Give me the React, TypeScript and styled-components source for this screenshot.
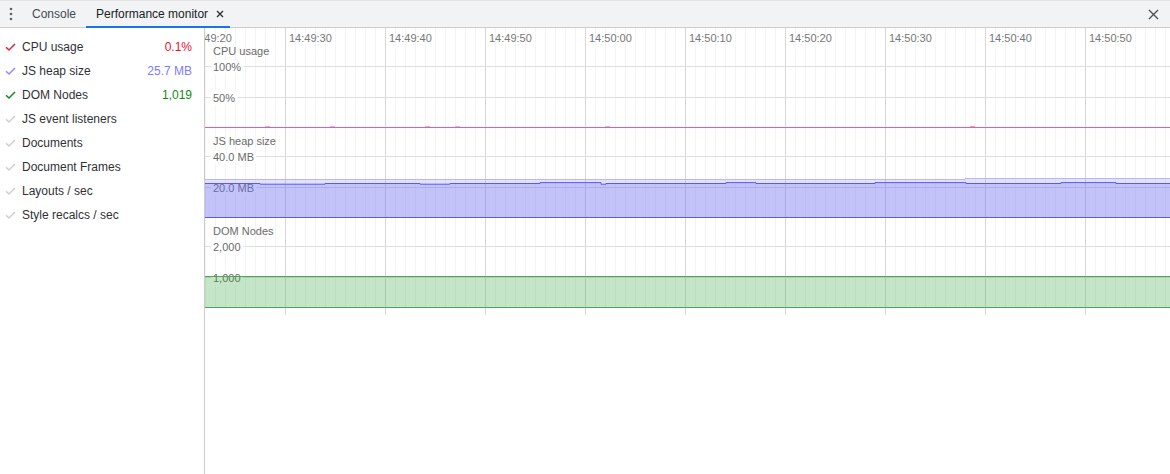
import React from "react";
import styled, { createGlobalStyle } from "styled-components";

const GlobalStyle = createGlobalStyle`
  html, body {
    margin: 0;
    padding: 0;
    background: #fff;
  }
  body {
    font-family: "Liberation Sans", Arial, sans-serif;
    font-size: 12px;
    color: #202124;
  }
`;

interface Metric {
    label: string;
    value?: string;
    color?: string;
    checkColor?: string;
}

const metrics: Metric[] = [
    { label: "CPU usage", value: "0.1%", color: "#e6122f", checkColor: "#e0223a" },
    { label: "JS heap size", value: "25.7 MB", color: "#7d7dff", checkColor: "#8c8cff" },
    { label: "DOM Nodes", value: "1,019", color: "#0f8a10", checkColor: "#14881a" },
    { label: "JS event listeners" },
    { label: "Documents" },
    { label: "Document Frames" },
    { label: "Layouts / sec" },
    { label: "Style recalcs / sec" },
];

const CHART_W = 965;
const SCALE = 61;

const times = ["14:49:20", "14:49:30", "14:49:40", "14:49:50", "14:50:00", "14:50:10", "14:50:20", "14:50:30", "14:50:40", "14:50:50"];

type Step = [number, number];

// heap levels, local to the heap panel
const N = 55.5;
const L = 56.2;
const H = 54.6;
const heapUsed: Step[] = [
    [0, N], [55, L], [120, N], [215, L], [245, N], [335, H], [396, L], [401, N],
    [521, H], [551, N], [670, H], [761, N], [856, H], [911, N],
];
const heapTotal: Step[] = [[0, 51.5], [760, 50.5]];

const stepPath = (steps: Step[], end: number) => {
    let d = `M${steps[0][0]} ${steps[0][1]}`;
    steps.slice(1).forEach(([x, y]) => {
        d += ` H${x} V${y}`;
    });
    return d + ` H${end}`;
};

const areaPath = (steps: Step[], end: number, base: number) =>
    stepPath(steps, end) + ` V${base} H${steps[0][0]} Z`;

const Check = ({ color }: { color: string }) => (
    <CheckIcon width="11" height="10" viewBox="0 0 11 10">
        <polyline points="1,5.2 4,8 10,2" fill="none" stroke={color} strokeWidth="1.5" />
    </CheckIcon>
);

interface Tick {
    value: number;
    label: string;
}

interface ChartProps {
    height: number;
    baseline: number;
    title: string;
    titleY: number;
    max: number;
    ticks: Tick[];
    showTimes?: boolean;
    children?: React.ReactNode;
}

const Chart = ({ height, baseline, title, titleY, max, ticks, showTimes, children }: ChartProps) => {
    const yOf = (v: number) => Math.round(baseline - (v / max) * SCALE) + 0.5;
    const verticals = [];
    for (let x = 0; x < CHART_W; x += 10) {
        const major = (x - 80) % 100 === 0;
        verticals.push(
            <line
                key={x}
                x1={x + 0.5}
                x2={x + 0.5}
                y1={0}
                y2={major ? height : Math.min(height, baseline + 1)}
                stroke={major ? "#d8d8d8" : "#f4f4f4"}
            />
        );
    }
    return (
        <ChartSvg width={CHART_W} height={height}>
            {verticals}
            {ticks.map((t) => (
                <g key={t.label}>
                    <line x1={0} x2={CHART_W} y1={yOf(t.value)} y2={yOf(t.value)} stroke="#dedede" />
                    <GridLabel x={8} y={yOf(t.value)}>{t.label}</GridLabel>
                </g>
            ))}
            {showTimes && times.map((t, i) => (
                <TimeLabel key={t} x={-20 + i * 100 + 4} y={9.5}>{t}</TimeLabel>
            ))}
            <ChartTitle x={8} y={titleY}>{title}</ChartTitle>
            {children}
        </ChartSvg>
    );
};

const App = () => {
    return (
        <Page>
            <GlobalStyle />
            <TabBar>
                <Kebab>
                    <svg width="4" height="14" viewBox="0 0 4 14">
                        <circle cx="2" cy="2" r="1.3" fill="#5f6368" />
                        <circle cx="2" cy="7" r="1.3" fill="#5f6368" />
                        <circle cx="2" cy="12" r="1.3" fill="#5f6368" />
                    </svg>
                </Kebab>
                <Tab>Console</Tab>
                <Tab $active>
                    Performance monitor
                    <svg width="8" height="8" viewBox="0 0 8 8">
                        <path d="M1 1 L7 7 M7 1 L1 7" stroke="#333" strokeWidth="1.4" />
                    </svg>
                </Tab>
                <Spacer />
                <CloseButton>
                    <svg width="11" height="11" viewBox="0 0 11 11">
                        <path d="M1 1 L10 10 M10 1 L1 10" stroke="#4d5156" strokeWidth="1.4" />
                    </svg>
                </CloseButton>
            </TabBar>
            <Body>
                <Sidebar>
                    {metrics.map((m) => (
                        <MetricRow key={m.label}>
                            <Check color={m.checkColor ?? "#cfcfcf"} />
                            <MetricLabel>{m.label}</MetricLabel>
                            {m.value && <MetricValue $color={m.color}>{m.value}</MetricValue>}
                        </MetricRow>
                    ))}
                </Sidebar>
                <Charts>
                    <Chart
                        height={100}
                        baseline={99}
                        title="CPU usage"
                        titleY={23}
                        max={100}
                        ticks={[{ value: 100, label: "100%" }, { value: 50, label: "50%" }]}
                        showTimes
                    >
                        {[60, 125, 220, 250, 400].map((x) => (
                            <line key={x} x1={x} x2={x + 5} y1={98.5} y2={98.5} stroke="#c4c4c4" />
                        ))}
                        <line x1={765} x2={770} y1={98.5} y2={98.5} stroke="#f2a65a" />
                        <line x1={0} x2={CHART_W} y1={99.5} y2={99.5} stroke="#d55bd5" />
                    </Chart>
                    <Chart
                        height={90}
                        baseline={89}
                        title="JS heap size"
                        titleY={13}
                        max={40}
                        ticks={[{ value: 40, label: "40.0 MB" }, { value: 20, label: "20.0 MB" }]}
                    >
                        <path d={areaPath(heapTotal, CHART_W, 89)} fill="rgba(110, 110, 245, 0.2)" />
                        <path d={stepPath(heapTotal, CHART_W)} fill="none" stroke="#b8b8f8" />
                        <path d={areaPath(heapUsed, CHART_W, 89)} fill="rgba(110, 110, 245, 0.27)" />
                        <path d={stepPath(heapUsed, CHART_W)} fill="none" stroke="#5a5af0" />
                        <line x1={0} x2={CHART_W} y1={89.5} y2={89.5} stroke="#5a5af0" />
                    </Chart>
                    <Chart
                        height={97}
                        baseline={89}
                        title="DOM Nodes"
                        titleY={13}
                        max={2000}
                        ticks={[{ value: 2000, label: "2,000" }, { value: 1000, label: "1,000" }]}
                    >
                        <rect x={0} y={58.5} width={CHART_W} height={31} fill="rgba(60, 170, 70, 0.3)" />
                        <line x1={0} x2={CHART_W} y1={58.5} y2={58.5} stroke="#4ea852" />
                        <line x1={0} x2={CHART_W} y1={89.5} y2={89.5} stroke="#4ea852" />
                    </Chart>
                </Charts>
            </Body>
        </Page>
    );
};

const Page = styled.div`
    width: 1170px;
    height: 474px;
    display: flex;
    flex-direction: column;
    overflow: hidden;
`;
const TabBar = styled.div`
    height: 28px;
    flex-shrink: 0;
    display: flex;
    align-items: stretch;
    background: #f1f3f4;
    box-shadow: inset 0 -1px 0 #cbcdd1, inset 0 1px 0 #e3e3e3;
`;
const Kebab = styled.div`
    width: 22px;
    display: flex;
    align-items: center;
    justify-content: center;
`;
const Tab = styled.div<{ $active?: boolean }>`
    display: flex;
    align-items: center;
    gap: 8px;
    padding: 2px ${(p) => (p.$active ? "6px" : "10px")} 0 10px;
    box-sizing: border-box;
    font-size: 12px;
    color: ${(p) => (p.$active ? "#202124" : "#474a4f")};
    border-bottom: 2px solid ${(p) => (p.$active ? "#1a73e8" : "transparent")};
`;
const Spacer = styled.div`
    flex: 1;
`;
const CloseButton = styled.div`
    width: 24px;
    margin-right: 5px;
    display: flex;
    align-items: center;
    justify-content: center;
`;
const Body = styled.div`
    flex: 1;
    display: flex;
    min-height: 0;
`;
const Sidebar = styled.div`
    width: 204px;
    flex-shrink: 0;
    border-right: 1px solid #cbcbcb;
    padding-top: 7px;
    box-sizing: content-box;
`;
const MetricRow = styled.div`
    height: 24px;
    display: flex;
    align-items: center;
    padding: 0 12px 0 5px;
`;
const CheckIcon = styled.svg`
    flex-shrink: 0;
    margin-right: 6px;
`;
const MetricLabel = styled.div`
    flex: 1;
    font-size: 12px;
    color: #303135;
    white-space: nowrap;
`;
const MetricValue = styled.div<{ $color?: string }>`
    font-size: 12px;
    color: ${(p) => p.$color};
`;
const Charts = styled.div`
    flex: 1;
    display: flex;
    flex-direction: column;
    overflow: hidden;
`;
const ChartSvg = styled.svg`
    display: block;
    flex-shrink: 0;
    font-family: "Liberation Sans", Arial, sans-serif;
`;
const GridLabel = styled.text`
    font-size: 11px;
    fill: #6b6b6b;
    dominant-baseline: central;
    paint-order: stroke;
    stroke: #fff;
    stroke-width: 6px;
    stroke-linejoin: round;
`;
const ChartTitle = styled.text`
    font-size: 11px;
    fill: #6b6b6b;
    dominant-baseline: central;
`;
const TimeLabel = styled.text`
    font-size: 11px;
    fill: #777;
    dominant-baseline: central;
`;

export default App;
